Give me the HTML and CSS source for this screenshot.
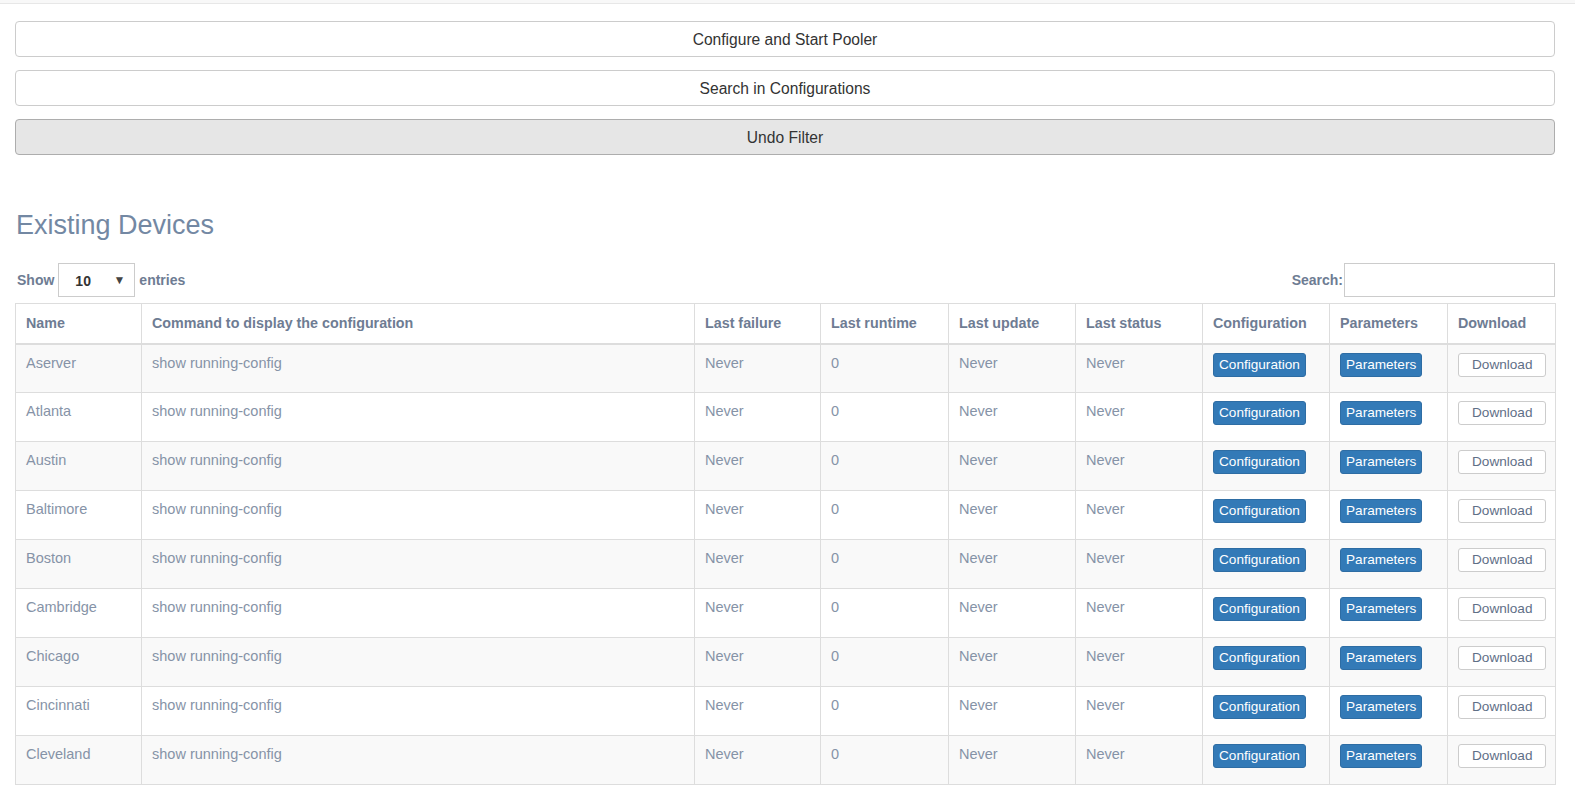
FILE: index.html
```html
<!DOCTYPE html>
<html lang="en">
<head>
<meta charset="utf-8">
<title>Existing Devices</title>
<link rel="stylesheet" href="styles.css">
</head>
<body>
<div class="topbar"></div>
<main class="page">
  <div class="actions">
    <button class="wide-btn">Configure and Start Pooler</button>
    <button class="wide-btn">Search in Configurations</button>
    <button class="wide-btn active">Undo Filter</button>
  </div>

  <h2 class="title">Existing Devices</h2>

  <div class="controls">
    <div class="length">
      <span class="lbl">Show</span>
      <div class="fake-select"><span class="val">10</span><span class="arrow">▼</span></div>
      <span class="lbl">entries</span>
    </div>
    <div class="search">
      <span class="lbl">Search:</span>
      <input class="search-input" type="text">
    </div>
  </div>

  <table class="devices">
    <colgroup>
      <col style="width:126px"><col style="width:553px"><col style="width:126px"><col style="width:128px"><col style="width:127px"><col style="width:127px"><col style="width:127px"><col style="width:118px"><col style="width:108px">
    </colgroup>
    <thead>
      <tr>
        <th>Name</th><th>Command to display the configuration</th><th>Last failure</th><th>Last runtime</th><th>Last update</th><th>Last status</th><th>Configuration</th><th>Parameters</th><th>Download</th>
      </tr>
    </thead>
    <tbody>
      <tr><td>Aserver</td><td>show running-config</td><td>Never</td><td>0</td><td>Never</td><td>Never</td><td><button class="btn-blue">Configuration</button></td><td><button class="btn-blue">Parameters</button></td><td><button class="btn-white">Download</button></td></tr>
      <tr><td>Atlanta</td><td>show running-config</td><td>Never</td><td>0</td><td>Never</td><td>Never</td><td><button class="btn-blue">Configuration</button></td><td><button class="btn-blue">Parameters</button></td><td><button class="btn-white">Download</button></td></tr>
      <tr><td>Austin</td><td>show running-config</td><td>Never</td><td>0</td><td>Never</td><td>Never</td><td><button class="btn-blue">Configuration</button></td><td><button class="btn-blue">Parameters</button></td><td><button class="btn-white">Download</button></td></tr>
      <tr><td>Baltimore</td><td>show running-config</td><td>Never</td><td>0</td><td>Never</td><td>Never</td><td><button class="btn-blue">Configuration</button></td><td><button class="btn-blue">Parameters</button></td><td><button class="btn-white">Download</button></td></tr>
      <tr><td>Boston</td><td>show running-config</td><td>Never</td><td>0</td><td>Never</td><td>Never</td><td><button class="btn-blue">Configuration</button></td><td><button class="btn-blue">Parameters</button></td><td><button class="btn-white">Download</button></td></tr>
      <tr><td>Cambridge</td><td>show running-config</td><td>Never</td><td>0</td><td>Never</td><td>Never</td><td><button class="btn-blue">Configuration</button></td><td><button class="btn-blue">Parameters</button></td><td><button class="btn-white">Download</button></td></tr>
      <tr><td>Chicago</td><td>show running-config</td><td>Never</td><td>0</td><td>Never</td><td>Never</td><td><button class="btn-blue">Configuration</button></td><td><button class="btn-blue">Parameters</button></td><td><button class="btn-white">Download</button></td></tr>
      <tr><td>Cincinnati</td><td>show running-config</td><td>Never</td><td>0</td><td>Never</td><td>Never</td><td><button class="btn-blue">Configuration</button></td><td><button class="btn-blue">Parameters</button></td><td><button class="btn-white">Download</button></td></tr>
      <tr><td>Cleveland</td><td>show running-config</td><td>Never</td><td>0</td><td>Never</td><td>Never</td><td><button class="btn-blue">Configuration</button></td><td><button class="btn-blue">Parameters</button></td><td><button class="btn-white">Download</button></td></tr>
    </tbody>
  </table>
</main>
</body>
</html>
```

FILE: styles.css
```css
* { box-sizing: border-box; }

html, body {
  margin: 0;
  padding: 0;
  background: #fff;
  font-family: "Liberation Sans", Arial, sans-serif;
  font-size: 14px;
  color: #333;
}

.topbar {
  height: 4px;
  background: #f8f8f8;
  border-bottom: 1px solid #e7e7e7;
}

.page {
  width: 1540px;
  margin-left: 15px;
  padding-top: 17px;
}

.actions {
  display: flex;
  flex-direction: column;
  gap: 13px;
}

.wide-btn {
  display: block;
  width: 100%;
  height: 36px;
  padding: 1px 12px 0;
  font-family: "Liberation Sans", Arial, sans-serif;
  font-size: 15.6px;
  color: #333;
  background: #fff;
  border: 1px solid #ccc;
  border-radius: 4px;
  text-align: center;
  cursor: pointer;
}

.wide-btn.active {
  background: #e6e6e6;
  border-color: #adadad;
}

.title {
  margin: 55px 0 0 1px;
  font-size: 27px;
  line-height: 30px;
  font-weight: normal;
  color: #7388a3;
}

.controls {
  display: flex;
  justify-content: space-between;
  align-items: center;
  margin-top: 23px;
  height: 34px;
}

.length, .search {
  display: flex;
  align-items: center;
  gap: 4px;
}

.lbl {
  font-weight: bold;
  font-size: 14px;
  color: #6e7c93;
}

.length .lbl:first-child { margin-left: 2px; }

.fake-select {
  width: 77px;
  height: 34px;
  border: 1px solid #ccc;
  display: flex;
  align-items: center;
  justify-content: space-between;
  padding: 0 9px 0 16px;
  background: #fff;
}

.fake-select .val {
  font-size: 14px;
  font-weight: bold;
  color: #333;
  margin-top: 2px;
}

.fake-select .arrow {
  font-size: 12px;
  color: #444;
}

.search { gap: 1px; }

.search-input {
  width: 211px;
  height: 34px;
  border: 1px solid #ccc;
  padding: 0 6px;
  font-family: inherit;
  font-size: 14px;
}

.devices {
  width: 1540px;
  margin-top: 6px;
  border-collapse: collapse;
  table-layout: fixed;
  border: 1px solid #ddd;
}

.devices th,
.devices td {
  border: 1px solid #ddd;
  text-align: left;
  vertical-align: top;
  padding: 8px 10px;
  line-height: 20px;
  white-space: nowrap;
}

.devices th {
  font-weight: bold;
  font-size: 14.3px;
  color: #6e7c93;
  height: 40px;
  padding-top: 9px;
  border-bottom-width: 2px;
}

.devices td {
  font-size: 14.5px;
  color: #8693a7;
  height: 49px;
}

.devices tbody tr:nth-child(odd) td { background: #f9f9f9; }

.btn-blue,
.btn-white {
  display: inline-block;
  height: 24px;
  margin-top: 0;
  padding: 1px 5px;
  font-family: "Liberation Sans", Arial, sans-serif;
  font-size: 13.6px;
  line-height: 20px;
  border-radius: 3px;
  vertical-align: top;
  cursor: pointer;
}

.btn-blue {
  color: #fff;
  background: #337ab7;
  border: 1px solid #2e6da4;
}

.btn-white {
  color: #5f6f87;
  background: #fff;
  border: 1px solid #ccc;
  padding: 1px 13px;
}
```
